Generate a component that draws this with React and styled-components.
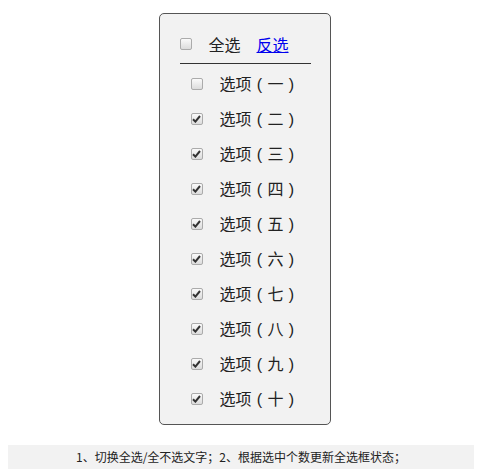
import React, { useState } from "react";
import styled, { createGlobalStyle } from "styled-components";

const GlobalStyle = createGlobalStyle`
  body {
    margin: 8px;
    background: #fff;
    font-family: "Noto Sans CJK SC", "Liberation Sans", sans-serif;
    color: #333;
  }
`;

const Page = styled.div`
  display: flex;
  flex-direction: column;
  align-items: center;
  padding-top: 5px;
  padding-right: 5px;
`;

const Panel = styled.div`
  box-sizing: border-box;
  width: 172px;
  padding: 16px 19px 8px 20px;
  background: #f2f2f2;
  border: 1px solid #555;
  border-radius: 5px;
`;

const Header = styled.div`
  display: flex;
  align-items: center;
  height: 27px;
  padding-bottom: 6px;
  border-bottom: 1px solid #333;
  margin-bottom: 2px;
`;

const Row = styled.label`
  display: flex;
  align-items: center;
  height: 35px;
  padding-left: ${(p) => (p.indent ? "11px" : "0")};
  cursor: pointer;
`;

const Box = styled.span`
  box-sizing: border-box;
  flex: none;
  width: 12px;
  height: 12px;
  border: 1px solid #ababab;
  border-radius: 2px;
  background: linear-gradient(#fafafa, #dcdcdc);
  display: flex;
  align-items: center;
  justify-content: center;
  margin-right: 17px;
`;

const Label = styled.span`
  font-size: 16px;
  line-height: 20px;
  color: #222;
  white-space: nowrap;
`;

const Paren = styled.span`
  display: inline-block;
  width: 1em;
  text-align: center;
  font-family: "Liberation Sans", sans-serif;
`;

const Toggle = styled.a`
  font-size: 16px;
  line-height: 20px;
  color: #0000ee;
  text-decoration: underline;
  margin-left: 16px;
  cursor: pointer;
`;

const Note = styled.div`
  align-self: stretch;
  margin: 20px 7px 0 0;
  height: 24px;
  background: #f2f2f2;
  font-size: 12px;
  line-height: 24px;
  color: #222;
  text-align: center;
`;

const Check = ({ checked }) => (
  <Box>
    {checked && (
      <svg width="9" height="8" viewBox="0 0 9 8">
        <path d="M1 4.2 L3.4 6.6 L8 1" fill="none" stroke="#333" strokeWidth="2" />
      </svg>
    )}
  </Box>
);

const names = ["一", "二", "三", "四", "五", "六", "七", "八", "九", "十"];

export default function App() {
  const [items, setItems] = useState(names.map((_, i) => i !== 0));
  const all = items.every(Boolean);

  const flip = (i) => setItems(items.map((v, j) => (j === i ? !v : v)));
  const toggleAll = () => setItems(items.map(() => !all));
  const invert = () => setItems(items.map((v) => !v));

  return (
    <>
      <GlobalStyle />
      <Page>
        <Panel>
          <Header>
            <Row as="div" onClick={toggleAll}>
              <Check checked={all} />
              <Label>{all ? "全不选" : "全选"}</Label>
            </Row>
            <Toggle onClick={invert}>反选</Toggle>
          </Header>
          {names.map((n, i) => (
            <Row indent key={n} onClick={() => flip(i)}>
              <Check checked={items[i]} />
              <Label>
                选项<Paren>(</Paren>
                {n}
                <Paren>)</Paren>
              </Label>
            </Row>
          ))}
        </Panel>
        <Note>1、切换全选/全不选文字；2、根据选中个数更新全选框状态；</Note>
      </Page>
    </>
  );
}
